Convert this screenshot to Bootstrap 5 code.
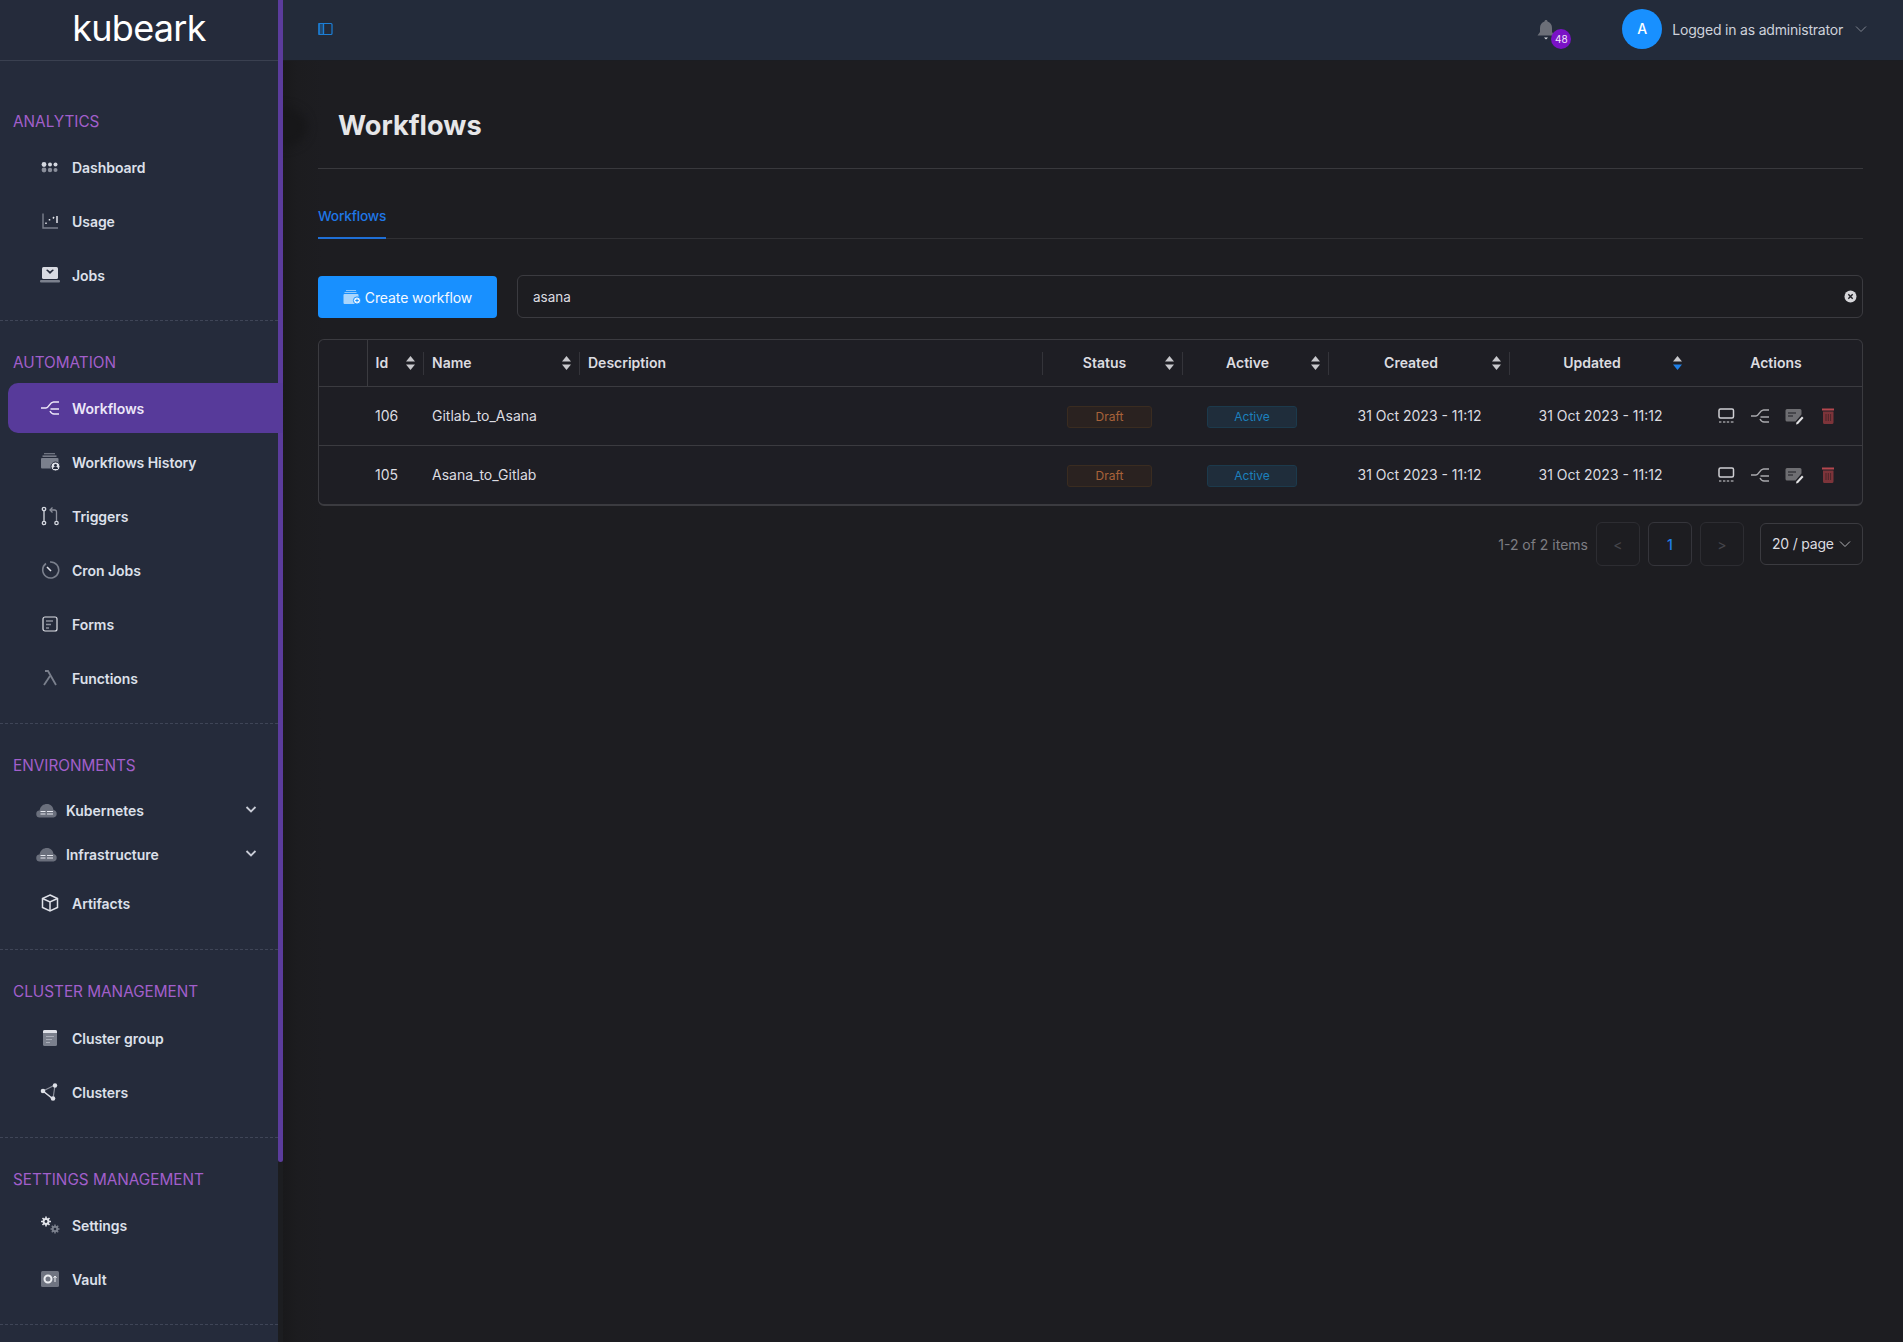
<!DOCTYPE html>
<html lang="en">
<head>
  <meta charset="UTF-8" />
  <meta name="viewport" content="width=device-width, initial-scale=1.0"/>
  <title>Workflows | Kubeark</title>

  <!-- Bootstrap CSS -->
  <link href="https://cdn.jsdelivr.net/npm/bootstrap@5.3.3/dist/css/bootstrap.min.css" rel="stylesheet" />

  <!-- Custom CSS -->
  <style>
    html, body { height: 100%; }
    body {
      font-family: Inter, "Liberation Sans", sans-serif;
      font-size: 14px;
      background-color: #1d1d21;
      color: #d8d8dc;
      overflow: hidden;
    }

    .app-shell { height: 100vh; }
    .main-col { min-width: 0; }

    /* sidebar */
    .side {
      position: relative;
      flex: 0 0 283px;
      width: 283px;
      padding-right: 5px;
      background: #252b3b;
      box-shadow: inset -5px 0 0 #1c1d20;
      overflow: hidden;
    }
    .side-thumb {
      position: absolute;
      left: 278px;
      top: 0;
      width: 5px;
      height: 1162px;
      background: #5b3c9c;
      border-radius: 0 0 3px 3px;
    }
    .side-logo {
      height: 61px;
      border-bottom: 1px solid #3a4050;
      font-size: 36px;
      line-height: 56px;
      font-weight: 400;
      letter-spacing: -.7px;
      color: #fff;
    }
    .side-group {
      padding: 49px 0 20px;
      border-bottom: 1px dashed #3f4557;
    }
    .side-group + .side-group { padding-top: 30px; }
    .side-group.group-env { padding-bottom: 21px; }
    .side-title {
      height: 24px;
      line-height: 24px;
      padding-left: 13px;
      margin-bottom: 8px;
      font-size: 15.3px;
      color: #a25fcb;
    }
    .side-title-wide { margin-bottom: 9px; }
    .side-link {
      position: relative;
      z-index: 1;
      display: flex;
      align-items: center;
      height: 50px;
      margin: 0 -5px 4px 8px;
      padding: 0 0 0 32px;
      border-radius: 10px 0 0 10px;
      font-weight: 600;
      letter-spacing: -.05px;
      color: #dde0ea;
    }
    .side-link:hover { color: #dde0ea; }
    .side-link:last-child { margin-bottom: 0; }
    .side-link.is-on { background: #573a9a; color: #ece6f8; }
    .side-link .nav-ic { flex: 0 0 20px; width: 20px; height: 20px; margin-right: 12px; }
    .side-link.is-sub { height: 40px; padding-left: 28px; }
    .side-link.is-sub .nav-ic { flex: 0 0 22px; width: 22px; margin-right: 8px; }
    .side-link.is-sub .nav-caret { margin-left: auto; margin-right: 26px; width: 12px; height: 12px; margin-top: -2px; }
    .sub-first { margin-top: 4px; }

    /* top bar */
    .top-bar {
      height: 61px;
      padding: 0 36px 2px 35px;
      background: #232b3a;
      border-bottom: 1px solid #1b1d22;
      flex-wrap: nowrap;
    }
    .bell-box { position: relative; width: 34px; height: 40px; margin-right: 51px; padding-top: 10px; }
    .bell-count {
      position: absolute;
      left: 14px;
      top: 20px;
      width: 20px;
      height: 20px;
      border-radius: 50%;
      background: #7a12c6;
      color: #f2e8fb;
      font-size: 10px;
      line-height: 20px;
      text-align: center;
    }
    .user-dot {
      width: 40px;
      height: 40px;
      border-radius: 50%;
      background: #1890ff;
      color: #fff;
      line-height: 40px;
      text-align: center;
      font-weight: 500;
    }
    .user-name { margin: 0 12px 0 10px; color: #ced2db; letter-spacing: -.2px; }
    .user-chev { color: #7f848f; }

    /* content */
    .page-wrap {
      position: relative;
      flex: 1 1 auto;
      min-width: 0;
      overflow: hidden;
      background: linear-gradient(90deg, #19191b 0, #1c1c1f 14px, #1d1d21 40px);
    }
    .page-blob {
      position: absolute;
      left: -24px;
      top: 46px;
      width: 48px;
      height: 40px;
      border-radius: 50%;
      background: #171719;
      filter: blur(5px);
    }
    .page-body { position: relative; padding: 0 40px 0 35px; }
    .page-head {
      height: 108px;
      padding: 40px 0 0 20px;
      border-bottom: 1px solid #39393d;
    }
    .page-head h1 {
      margin: 0;
      font-size: 27.2px;
      line-height: 50px;
      font-weight: 700;
      color: #e6e6e8;
    }
    .tab-row {
      padding-top: 39px;
      border-bottom: 1px solid #303034;
    }
    .tab-row .nav-tabs .nav-link.active {
      padding: 0 0 12px;
      margin-bottom: -1px;
      border: 0;
      border-bottom: 2px solid #1f6fd6;
      border-radius: 0;
      background: transparent;
      color: #1f77e6;
      font-weight: 500;
      line-height: 17px;
      font-size: 13.7px;
      letter-spacing: -.2px;
    }
    .tool-row { margin-top: 36px; }
    .btn-create {
      flex: 0 0 179px;
      height: 42px;
      margin-top: 1px;
      padding: 0;
      border: 0;
      border-radius: 4px;
      background: #1890ff;
      color: #f4f9ff;
      font-size: 14px;
      font-weight: 400;
      letter-spacing: -.1px;
    }
    .btn-create:hover { background: #1890ff; color: #f4f9ff; }
    .find-box { position: relative; flex: 1 1 auto; }
    .find-box .form-control {
      height: 43px;
      padding: 0 15px;
      background: transparent;
      border: 1px solid #3b3b40;
      border-radius: 6px;
      color: #dcdce0;
      font-size: 13.5px;
    }
    .find-clear { position: absolute; right: 6px; top: 15px; width: 13px; height: 13px; }

    .grid-box {
      margin-top: 21px;
      border: 1px solid #3b3b40;
      border-bottom-width: 2px;
      border-radius: 6px;
      background: #1e1e24;
      overflow: hidden;
    }
    .grid-box .table {
      --bs-table-bg: transparent;
      --bs-table-color: #dcdce0;
      margin: 0;
      table-layout: fixed;
      font-size: 14px;
    }
    .grid-box th {
      position: relative;
      height: 46px;
      padding: 0 9px 0 8px;
      vertical-align: middle;
      border-bottom: 1px solid #3b3b40;
      color: #dcdce0;
      font-weight: 600;
    }
    .grid-box th.sep-full { border-right: 1px solid #3b3b40; }
    .grid-box th.sep::after {
      content: "";
      position: absolute;
      right: 0;
      top: 12px;
      height: 23px;
      width: 1px;
      background: #34343a;
    }
    .grid-box td {
      height: 59px;
      padding: 0 8px;
      vertical-align: middle;
      border-bottom: 1px solid #3b3b40;
    }
    .grid-box tr:last-child td { border-bottom: 0; }
    .sort-ic { flex: 0 0 9px; width: 9px; height: 14px; color: #c8c8cc; }
    .head-mid { padding-right: 7px; }
    .grid-box td.cell-draft { padding-right: 15px; }
    .grid-box td.cell-live { padding-right: 16px; }
    .tag {
      display: inline-block;
      height: 22px;
      margin-top: 3px;
      line-height: 20px;
      border-radius: 3px;
      font-size: 12px;
      text-align: center;
    }
    .tag-draft { width: 85px; background: #2a2220; border: 1px solid #3a2c20; color: #a8623a; }
    .tag-live { width: 90px; background: #1f2d3b; border: 1px solid #1c3a4c; color: #1c80bd; }
    .act-row { gap: 14px; padding-left: 1px; }
    .act-ic { width: 20px; height: 20px; }
    .act-flow { color: #a8a8ac; }

    .pager-row { margin-top: 16px; color: #7d7d83; }
    .pager-row .pagination { margin: 0 16px 0 8px; gap: 8px; }
    .pager-row .page-item .page-link {
      display: block;
      width: 44px;
      height: 44px;
      margin-left: 0;
      padding: 0;
      line-height: 44px;
      text-align: center;
      background: transparent;
      border: 1px solid #2d2d32;
      border-radius: 6px;
      color: #45454b;
      font-size: 14px;
    }
    .pager-row .page-item.active .page-link { border-color: #35353b; color: #1f7fe6; background: transparent; font-weight: 500; }
    .size-pick {
      width: 103px;
      height: 42px;
      margin-top: -1px;
      padding: 0 11px;
      border: 1px solid #3b3b40;
      border-radius: 6px;
      color: #dcdce0;
      letter-spacing: -.2px;
    }
    .size-chev { color: #b0b0b4; }
  </style>
</head>

<body>
  <!-- shared icons -->
  <svg width="0" height="0" class="position-absolute">
    <symbol id="i-flow" viewBox="0 0 20 20">
      <path d="M1 10h5c3 0 3.500-6 7.500-6H19M10.500 11H19M10 13c1 2 2.500 3 4 3h5" fill="none" stroke="currentColor" stroke-width="1.500"/>
    </symbol>
    <symbol id="i-cloud" viewBox="0 0 22 20">
      <path d="M4 17.500a3.500 3.500 0 0 1-.5-7C4.500 6 7.500 4 11 4c3.500 0 6 2.500 6.500 6a3.800 3.800 0 0 1 0 7.500z" fill="#6a6f7c"/>
      <path d="M4.500 11.500h5M11 11.500h6M4.500 14h5M11 14h6" stroke="#e5e7ee" stroke-width="1"/>
    </symbol>
    <symbol id="i-caret" viewBox="0 0 12 12">
      <path d="M1.500 4l4.500 4.500L10.500 4" fill="none" stroke="#c9ccd6" stroke-width="1.800"/>
    </symbol>
    <symbol id="i-sort" viewBox="0 0 9 14">
      <path d="M4.500 0L9 5.500H0z" fill="currentColor"/>
      <path d="M4.500 14L0 8.500h9z" fill="currentColor"/>
    </symbol>
    <symbol id="i-screen" viewBox="0 0 20 20">
      <rect x="3" y="3" width="14.500" height="9" rx="1.500" fill="none" stroke="#d0d0d4" stroke-width="1.500"/>
      <path d="M3 16h2.400M7 16h2.400M10.800 16h2.400M14.800 16h2.700" stroke="#9a9a9e" stroke-width="1.500"/>
    </symbol>
    <symbol id="i-note" viewBox="0 0 20 20">
      <path d="M3 3h13a1.500 1.500 0 0 1 1.500 1.500v4l-6 7H3a1.500 1.500 0 0 1-1.500-1.500V4.500A1.500 1.500 0 0 1 3 3z" fill="#6e6e72"/>
      <path d="M4 7h8M4 10h5" stroke="#1e1e24" stroke-width="1.200"/>
      <path d="M12.500 16.500l5.500-6 1.500 1.500-5.500 6-2 .5z" fill="#e4e4e6"/>
    </symbol>
    <symbol id="i-bin" viewBox="0 0 20 20">
      <path d="M4 2.500h12v2H4z" fill="#b5474e"/>
      <path d="M5 5.500h10.500v11a1.500 1.500 0 0 1-1.500 1.500H6.500A1.500 1.500 0 0 1 5 16.500z" fill="#7d343a"/>
      <path d="M8 8v7M10.300 8v7M12.600 8v7" stroke="#4b2529" stroke-width="1"/>
    </symbol>
    <symbol id="i-chev" viewBox="0 0 12 12">
      <path d="M1 3.500l5 5 5-5" fill="none" stroke="currentColor" stroke-width="1"/>
    </symbol>
  </svg>

  <div class="app-shell d-flex">

    <!-- Sidebar -->
    <aside class="side">
      <div class="side-thumb"></div>
      <div class="side-logo text-center">kubeark</div>

      <div class="side-group">
        <div class="side-title">ANALYTICS</div>
        <nav class="nav flex-column">
          <a class="nav-link side-link" href="#"><svg class="nav-ic" viewBox="0 0 20 20"><g fill="#d5d8e0"><circle cx="4" cy="7.500" r="2.400"/><circle cx="10" cy="7.500" r="2"/><circle cx="15.500" cy="7.500" r="2"/></g><g fill="#8b8f9b"><circle cx="4" cy="13" r="2.400"/><circle cx="10" cy="13" r="2.200"/><circle cx="15.500" cy="13" r="2"/></g></svg>Dashboard</a>
          <a class="nav-link side-link" href="#"><svg class="nav-ic" viewBox="0 0 20 20"><path d="M3 2.500V17h15" fill="none" stroke="#7b808d" stroke-width="1.400"/><path d="M6 13v-1.500M9.500 9.500V8M13 7.500L14 6M17 12V5" stroke="#e2e4ea" stroke-width="1.500"/></svg>Usage</a>
          <a class="nav-link side-link" href="#"><svg class="nav-ic" viewBox="0 0 20 20"><rect x="2" y="2" width="16" height="12" rx="1.500" fill="#d9dbe2"/><path d="M6 5l4 4 4-4-1.500-.5L10 6.500 7.500 4.500z" fill="#252b3b"/><rect y="15" width="20" height="2.500" rx="1" fill="#7b808d"/></svg>Jobs</a>
        </nav>
      </div>

      <div class="side-group">
        <div class="side-title">AUTOMATION</div>
        <nav class="nav flex-column">
          <a class="nav-link side-link is-on" href="#"><svg class="nav-ic" viewBox="0 0 20 20"><use href="#i-flow"/></svg>Workflows</a>
          <a class="nav-link side-link" href="#"><svg class="nav-ic" viewBox="0 0 20 20"><path d="M4 1h11v1.300H4z" fill="#6f7481"/><path d="M2.500 3.500h14v1.300h-14z" fill="#8b8f9b"/><path d="M2 6h15.500a1 1 0 0 1 1 1v9.500H2a1 1 0 0 1-1-1V7a1 1 0 0 1 1-1z" fill="#7b808d"/><circle cx="15.500" cy="14.500" r="4.500" fill="#dfe1e8" stroke="#252b3b"/><circle cx="15.500" cy="13.300" r="1.400" fill="#252b3b"/><path d="M13 17a2.500 2.500 0 0 1 5 0z" fill="#252b3b"/></svg>Workflows History</a>
          <a class="nav-link side-link" href="#"><svg class="nav-ic" viewBox="0 0 20 20" fill="none" stroke="#d5d8e0" stroke-width="1.300"><circle cx="4" cy="3" r="1.700"/><circle cx="4" cy="17" r="1.700"/><circle cx="16.500" cy="17" r="1.700"/><path d="M4 5v10"/><path d="M16.500 15V6a2 2 0 0 0-2-2h-4" stroke="#8b8f9b"/><path d="M12.500 1.500L10 4l2.500 2.500" stroke="#8b8f9b"/></svg>Triggers</a>
          <a class="nav-link side-link" href="#"><svg class="nav-ic" viewBox="0 0 20 20" fill="none"><path d="M6 3.500A8 8 0 1 0 10 2" stroke="#7b808d" stroke-width="1.600"/><path d="M7 7l4 4" stroke="#dfe1e8" stroke-width="1.600"/></svg>Cron Jobs</a>
          <a class="nav-link side-link" href="#"><svg class="nav-ic" viewBox="0 0 20 20" fill="none"><rect x="3" y="3" width="14" height="14" rx="2" stroke="#dfe1e8" stroke-width="1.200"/><path d="M6 7h7M6 10.500h5M6 14h3" stroke="#8b8f9b" stroke-width="1.300"/></svg>Forms</a>
          <a class="nav-link side-link" href="#"><svg class="nav-ic" viewBox="0 0 20 20" fill="none"><path d="M5 3h3l8 14" stroke="#7b808d" stroke-width="1.800"/><path d="M10 8L4 17" stroke="#7b808d" stroke-width="1.800"/></svg>Functions</a>
        </nav>
      </div>

      <div class="side-group group-env">
        <div class="side-title">ENVIRONMENTS</div>
        <nav class="nav flex-column">
          <a class="nav-link side-link is-sub sub-first" href="#"><svg class="nav-ic" viewBox="0 0 22 20"><use href="#i-cloud"/></svg>Kubernetes<svg class="nav-caret"><use href="#i-caret"/></svg></a>
          <a class="nav-link side-link is-sub" href="#"><svg class="nav-ic" viewBox="0 0 22 20"><use href="#i-cloud"/></svg>Infrastructure<svg class="nav-caret"><use href="#i-caret"/></svg></a>
          <a class="nav-link side-link" href="#"><svg class="nav-ic" viewBox="0 0 20 20" fill="none" stroke="#dfe1e8" stroke-width="1.500"><path d="M10 2l7.500 3.500v9L10 18l-7.500-3.500v-9z"/><path d="M2.500 5.500L10 9l7.500-3.500M10 9v9"/></svg>Artifacts</a>
        </nav>
      </div>

      <div class="side-group">
        <div class="side-title side-title-wide">CLUSTER MANAGEMENT</div>
        <nav class="nav flex-column">
          <a class="nav-link side-link" href="#"><svg class="nav-ic" viewBox="0 0 20 20"><rect x="3" y="2" width="14" height="16" rx="1.500" fill="#7b808d"/><path d="M3 3.500A1.500 1.500 0 0 1 4.500 2h11A1.500 1.500 0 0 1 17 3.500V5H3z" fill="#dfe1e8"/><path d="M6 8.500h8M6 11.500h6M6 14.500h4" stroke="#a9adb8" stroke-width="1"/></svg>Cluster group</a>
          <a class="nav-link side-link" href="#"><svg class="nav-ic" viewBox="0 0 20 20"><path d="M3 9L15 3l-2 14z" fill="none" stroke="#8b8f9b" stroke-width="1.200"/><path d="M3 9l10 8" stroke="#dfe1e8" stroke-width="1.200"/><circle cx="3" cy="9" r="2.300" fill="#dfe1e8"/><circle cx="15" cy="3.500" r="2.200" fill="#dfe1e8"/><circle cx="13" cy="16.500" r="2.300" fill="#dfe1e8"/></svg>Clusters</a>
        </nav>
      </div>

      <div class="side-group">
        <div class="side-title">SETTINGS MANAGEMENT</div>
        <nav class="nav flex-column">
          <a class="nav-link side-link" href="#"><svg class="nav-ic" viewBox="0 0 20 20"><path d="M6 1.500v10M1 6.500h10M2.500 3l7 7M9.500 3l-7 7" stroke="#e2e4ea" stroke-width="1.600"/><circle cx="6" cy="6.500" r="3.400" fill="#e2e4ea"/><circle cx="6" cy="6.500" r="1.400" fill="#252b3b"/><path d="M15 9.500v9M10.500 14h9M11.800 10.800l6.400 6.400M18.200 10.800l-6.400 6.400" stroke="#7b808d" stroke-width="1.500"/><circle cx="15" cy="14" r="3.300" fill="#7b808d"/><circle cx="15" cy="14" r="1.300" fill="#252b3b"/></svg>Settings</a>
          <a class="nav-link side-link" href="#"><svg class="nav-ic" viewBox="0 0 20 20"><rect x="1" y="2" width="18" height="16" rx="1.500" fill="#6f7481"/><circle cx="8" cy="10" r="3.500" fill="none" stroke="#eceef2" stroke-width="2"/><path d="M15 13V7.500M13.500 9L15 7l1.500 2" fill="none" stroke="#eceef2" stroke-width="1"/></svg>Vault</a>
        </nav>
      </div>
    </aside>

    <div class="main-col d-flex flex-column flex-grow-1">

      <!-- Top bar -->
      <header class="navbar top-bar justify-content-between">
        <svg width="16" height="14" viewBox="0 0 16 14" fill="none" stroke="#1c7fd6" stroke-width="1.200"><rect x="1" y="1.500" width="13" height="11" rx="1"/><path d="M5.500 1.500v11" /><path d="M1 1.500h4.500v11H1z" fill="#1c7fd6" fill-opacity=".35"/></svg>
        <div class="d-flex align-items-center">
          <div class="bell-box">
            <svg width="18" height="22" viewBox="0 0 18 22" class="d-block"><path d="M9 1c1 0 1.500.7 1.500 1.600C13.500 3.400 15 6 15 9v4l2.500 3.500H.5L3 13V9c0-3 1.500-5.600 4.500-6.400C7.500 1.700 8 1 9 1z" fill="#6c6f78"/><path d="M7 18.500h4L9 20.500z" fill="#d5d7dd"/></svg>
            <span class="bell-count">48</span>
          </div>
          <div class="user-dot">A</div>
          <span class="user-name">Logged in as administrator</span>
          <svg width="12" height="12" class="user-chev"><use href="#i-chev"/></svg>
        </div>
      </header>

      <!-- Content -->
      <main class="page-wrap">
        <div class="page-blob"></div>
        <div class="page-body">
          <div class="page-head"><h1>Workflows</h1></div>

          <div class="tab-row">
            <ul class="nav nav-tabs border-0">
              <li class="nav-item"><a class="nav-link active" href="#">Workflows</a></li>
            </ul>
          </div>

          <div class="tool-row d-flex gap-3">
            <button type="button" class="btn btn-create d-flex align-items-center justify-content-center me-1">
              <svg width="18" height="16" viewBox="0 0 18 16" class="me-1"><path d="M3 1h10v1H3zM1.500 3h12v1h-12z" fill="#8fc8fb"/><path d="M1.500 5h13a1 1 0 0 1 1 1v9h-14a1 1 0 0 1-1-1V6a1 1 0 0 1 1-1z" fill="#a9d5fc"/><circle cx="14" cy="11.500" r="3.600" fill="#eaf5ff" stroke="#1890ff"/><path d="M12.300 11.500h3.400M14 9.800v3.400" stroke="#1890ff" stroke-width="1"/></svg>
              Create workflow
            </button>
            <div class="find-box">
              <input type="text" class="form-control" value="asana" />
              <svg class="find-clear" viewBox="0 0 13 13"><circle cx="6.500" cy="6.500" r="6" fill="#d6d6da"/><path d="M4.300 4.300l4.400 4.400M8.700 4.300l-4.400 4.400" stroke="#1e1e24" stroke-width="1.400"/></svg>
            </div>
          </div>

          <div class="grid-box">
            <table class="table">
              <colgroup>
                <col width="48"><col width="57"><col width="156"><col width="463"><col width="140"><col width="146"><col width="181"><col width="181"><col>
              </colgroup>
              <thead>
                <tr>
                  <th class="sep-full"></th>
                  <th class="sep"><div class="d-flex align-items-center justify-content-between">Id<svg class="sort-ic"><use href="#i-sort"/></svg></div></th>
                  <th class="sep"><div class="d-flex align-items-center justify-content-between">Name<svg class="sort-ic"><use href="#i-sort"/></svg></div></th>
                  <th class="sep">Description</th>
                  <th class="sep"><div class="d-flex align-items-center"><span class="flex-grow-1 text-center head-mid">Status</span><svg class="sort-ic"><use href="#i-sort"/></svg></div></th>
                  <th class="sep"><div class="d-flex align-items-center"><span class="flex-grow-1 text-center head-mid">Active</span><svg class="sort-ic"><use href="#i-sort"/></svg></div></th>
                  <th class="sep"><div class="d-flex align-items-center"><span class="flex-grow-1 text-center head-mid">Created</span><svg class="sort-ic"><use href="#i-sort"/></svg></div></th>
                  <th><div class="d-flex align-items-center"><span class="flex-grow-1 text-center head-mid">Updated</span><svg class="sort-ic" viewBox="0 0 9 14"><path d="M4.500 0L9 5.500H0z" fill="#c8c8cc"/><path d="M4.500 14L0 8.500h9z" fill="#1f7fe6"/></svg></div></th>
                  <th class="text-center">Actions</th>
                </tr>
              </thead>
              <tbody>
                <tr>
                  <td></td><td>106</td><td>Gitlab_to_Asana</td><td></td>
                  <td class="text-center cell-draft"><span class="tag tag-draft">Draft</span></td>
                  <td class="text-center cell-live"><span class="tag tag-live">Active</span></td>
                  <td class="text-center">31 Oct 2023 - 11:12</td>
                  <td class="text-center">31 Oct 2023 - 11:12</td>
                  <td><div class="d-flex justify-content-center act-row">
                    <svg class="act-ic"><use href="#i-screen"/></svg>
                    <svg class="act-ic act-flow"><use href="#i-flow"/></svg>
                    <svg class="act-ic"><use href="#i-note"/></svg>
                    <svg class="act-ic"><use href="#i-bin"/></svg>
                  </div></td>
                </tr>
                <tr>
                  <td></td><td>105</td><td>Asana_to_Gitlab</td><td></td>
                  <td class="text-center cell-draft"><span class="tag tag-draft">Draft</span></td>
                  <td class="text-center cell-live"><span class="tag tag-live">Active</span></td>
                  <td class="text-center">31 Oct 2023 - 11:12</td>
                  <td class="text-center">31 Oct 2023 - 11:12</td>
                  <td><div class="d-flex justify-content-center act-row">
                    <svg class="act-ic"><use href="#i-screen"/></svg>
                    <svg class="act-ic act-flow"><use href="#i-flow"/></svg>
                    <svg class="act-ic"><use href="#i-note"/></svg>
                    <svg class="act-ic"><use href="#i-bin"/></svg>
                  </div></td>
                </tr>
              </tbody>
            </table>
          </div>

          <div class="pager-row d-flex justify-content-end align-items-center">
            <span>1-2 of 2 items</span>
            <ul class="pagination">
              <li class="page-item"><a class="page-link" href="#">&lt;</a></li>
              <li class="page-item active"><a class="page-link" href="#">1</a></li>
              <li class="page-item"><a class="page-link" href="#">&gt;</a></li>
            </ul>
            <div class="size-pick d-flex align-items-center justify-content-between">
              <span>20 / page</span>
              <svg width="12" height="12" class="size-chev"><use href="#i-chev"/></svg>
            </div>
          </div>
        </div>
      </main>
    </div>
  </div>

  <!-- Bootstrap JS -->
  <script src="https://cdn.jsdelivr.net/npm/bootstrap@5.3.3/dist/js/bootstrap.bundle.min.js"></script>
</body>
</html>
